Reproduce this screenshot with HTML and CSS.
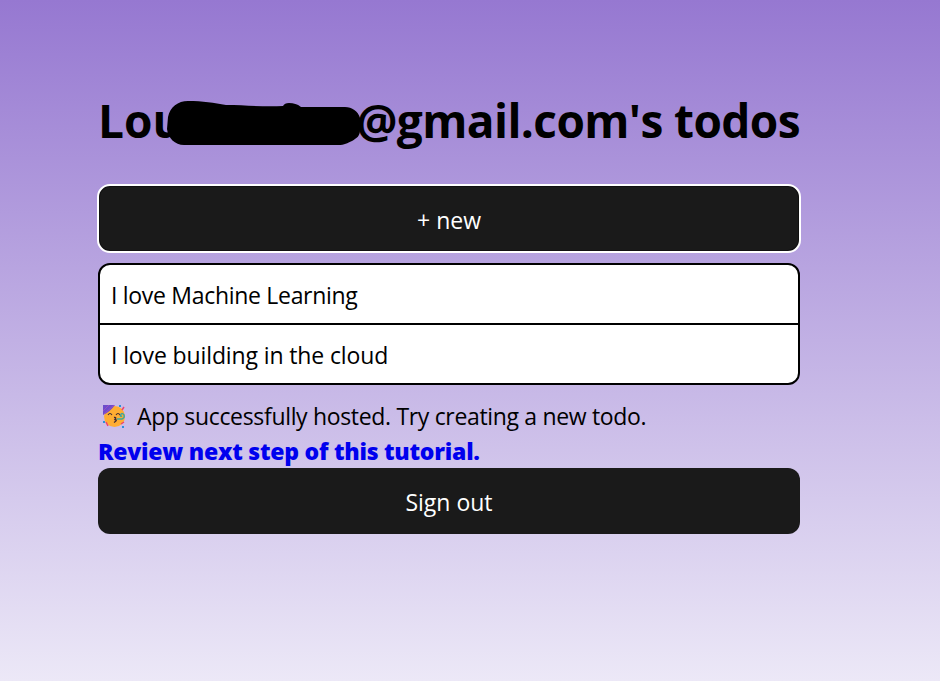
FILE: index.html
```html
<!DOCTYPE html>
<html lang="en">
<head>
    <meta charset="UTF-8">
    <meta name="viewport" content="width=device-width, initial-scale=1.0">
    <title>My todos</title>
    <link rel="stylesheet" href="styles.css">
</head>
<body>
    <main>
        <h1>
            <span class="user">Lou</span>
            <span class="domain">@gmail.com's todos</span>
            <svg class="marker" width="200" height="48" viewBox="167 100 200 48">
                <path d="M168 117C170 107 178 101 188 101C203 101 214 103 226 105C245 105 262 107 283 106C284 104 286 103 289 103C294 103 297 104 301 107H345C352 107 358 111 360 118V130C360 136 357 138 352 141C347 143 345 145 338 145H184C175 145 168 138 167 129Z"/>
            </svg>
        </h1>
        <button class="new">+ new</button>
        <ul>
            <li><span class="first">I love Machine Learning</span></li>
            <li><span class="second">I love building in the cloud</span></li>
        </ul>
        <div class="hosted">
            <svg class="party" width="24" height="24" viewBox="0 0 24 24">
                <circle cx="12.5" cy="12.5" r="10.5" fill="#ffad32"/>
                <path d="M1 1H13Q8 8 1 11Z" fill="#6d4ccb"/>
                <path d="M1 7L7 1M2 10L12 1" stroke="#a64ec0" stroke-width="0.8"/>
                <path d="M6 11Q8 8 10 11M14 11Q16 8 18 11" fill="none" stroke="#402a32" stroke-width="1.1"/>
                <path d="M12 13.5Q15 13 13 15.5Q16 16 12 18.5" fill="none" stroke="#402a32" stroke-width="1.3"/>
                <path d="M15 15H20Q23 14 22 11Q20 8 18.5 11Q18 13 20 12" fill="none" stroke="#3fa6a0" stroke-width="1.5"/>
                <path d="M20 6L22 3M4 18L6 22M19 20L22 18" stroke="#ef426f" stroke-width="1.5"/>
                <path d="M17 1H19V3H17ZM20 22H22V24H20ZM1 17H3V19H1Z" fill="#2d91dc"/>
            </svg>
            <span class="message">App successfully hosted. Try creating a new todo.</span>
        </div>
        <a href="#"><span class="next">Review next step of this tutorial.</span></a>
        <button class="signout">Sign out</button>
    </main>
</body>
</html>
```
FILE: styles.css
```css
body {
    margin: 0;
    min-height: 681px;
    background: linear-gradient(180deg, #9678d1, #ece8f7);
    font-family: "Open Sans", "Noto Sans", sans-serif;
    font-size: 23px;
}
main {
    display: flex;
    flex-direction: column;
    width: 702px;
    padding: 90px 0 0 98px;
}
h1 {
    display: flex;
    justify-content: space-between;
    position: relative;
    margin: 0 0 35px;
    height: 60px;
    line-height: 60px;
    font-size: 46px;
    white-space: nowrap;
}
.domain {
    letter-spacing: -0.6px;
}
.marker {
    position: absolute;
    left: 69px;
    top: 10px;
    overflow: visible;
}
button {
    height: 66px;
    padding: 2px 0 0;
    border: 0;
    border-radius: 12px;
    background: #1a1a1a;
    color: white;
    font: inherit;
}
.new {
    height: 67px;
    border: 2px solid #101010;
    outline: 2px solid white;
    outline-offset: -1px;
}
ul {
    margin: 11px 0 13px;
    padding: 0;
    list-style: none;
    border: 2px solid black;
    border-radius: 12px;
    background: white;
}
li {
    height: 58px;
    padding: 0 11px;
    line-height: 61px;
}
li + li {
    border-top: 2px solid black;
}
.first {
    letter-spacing: -0.3px;
}
.second {
    letter-spacing: -0.12px;
}
.hosted {
    display: flex;
    height: 35px;
    line-height: 36px;
}
.party {
    margin: 6px 11px 0 4px;
}
.message {
    letter-spacing: -0.33px;
}
a {
    height: 35px;
    line-height: 36px;
    color: #0000ee;
    font-weight: 800;
    text-decoration: none;
    letter-spacing: -0.24px;
}
```
